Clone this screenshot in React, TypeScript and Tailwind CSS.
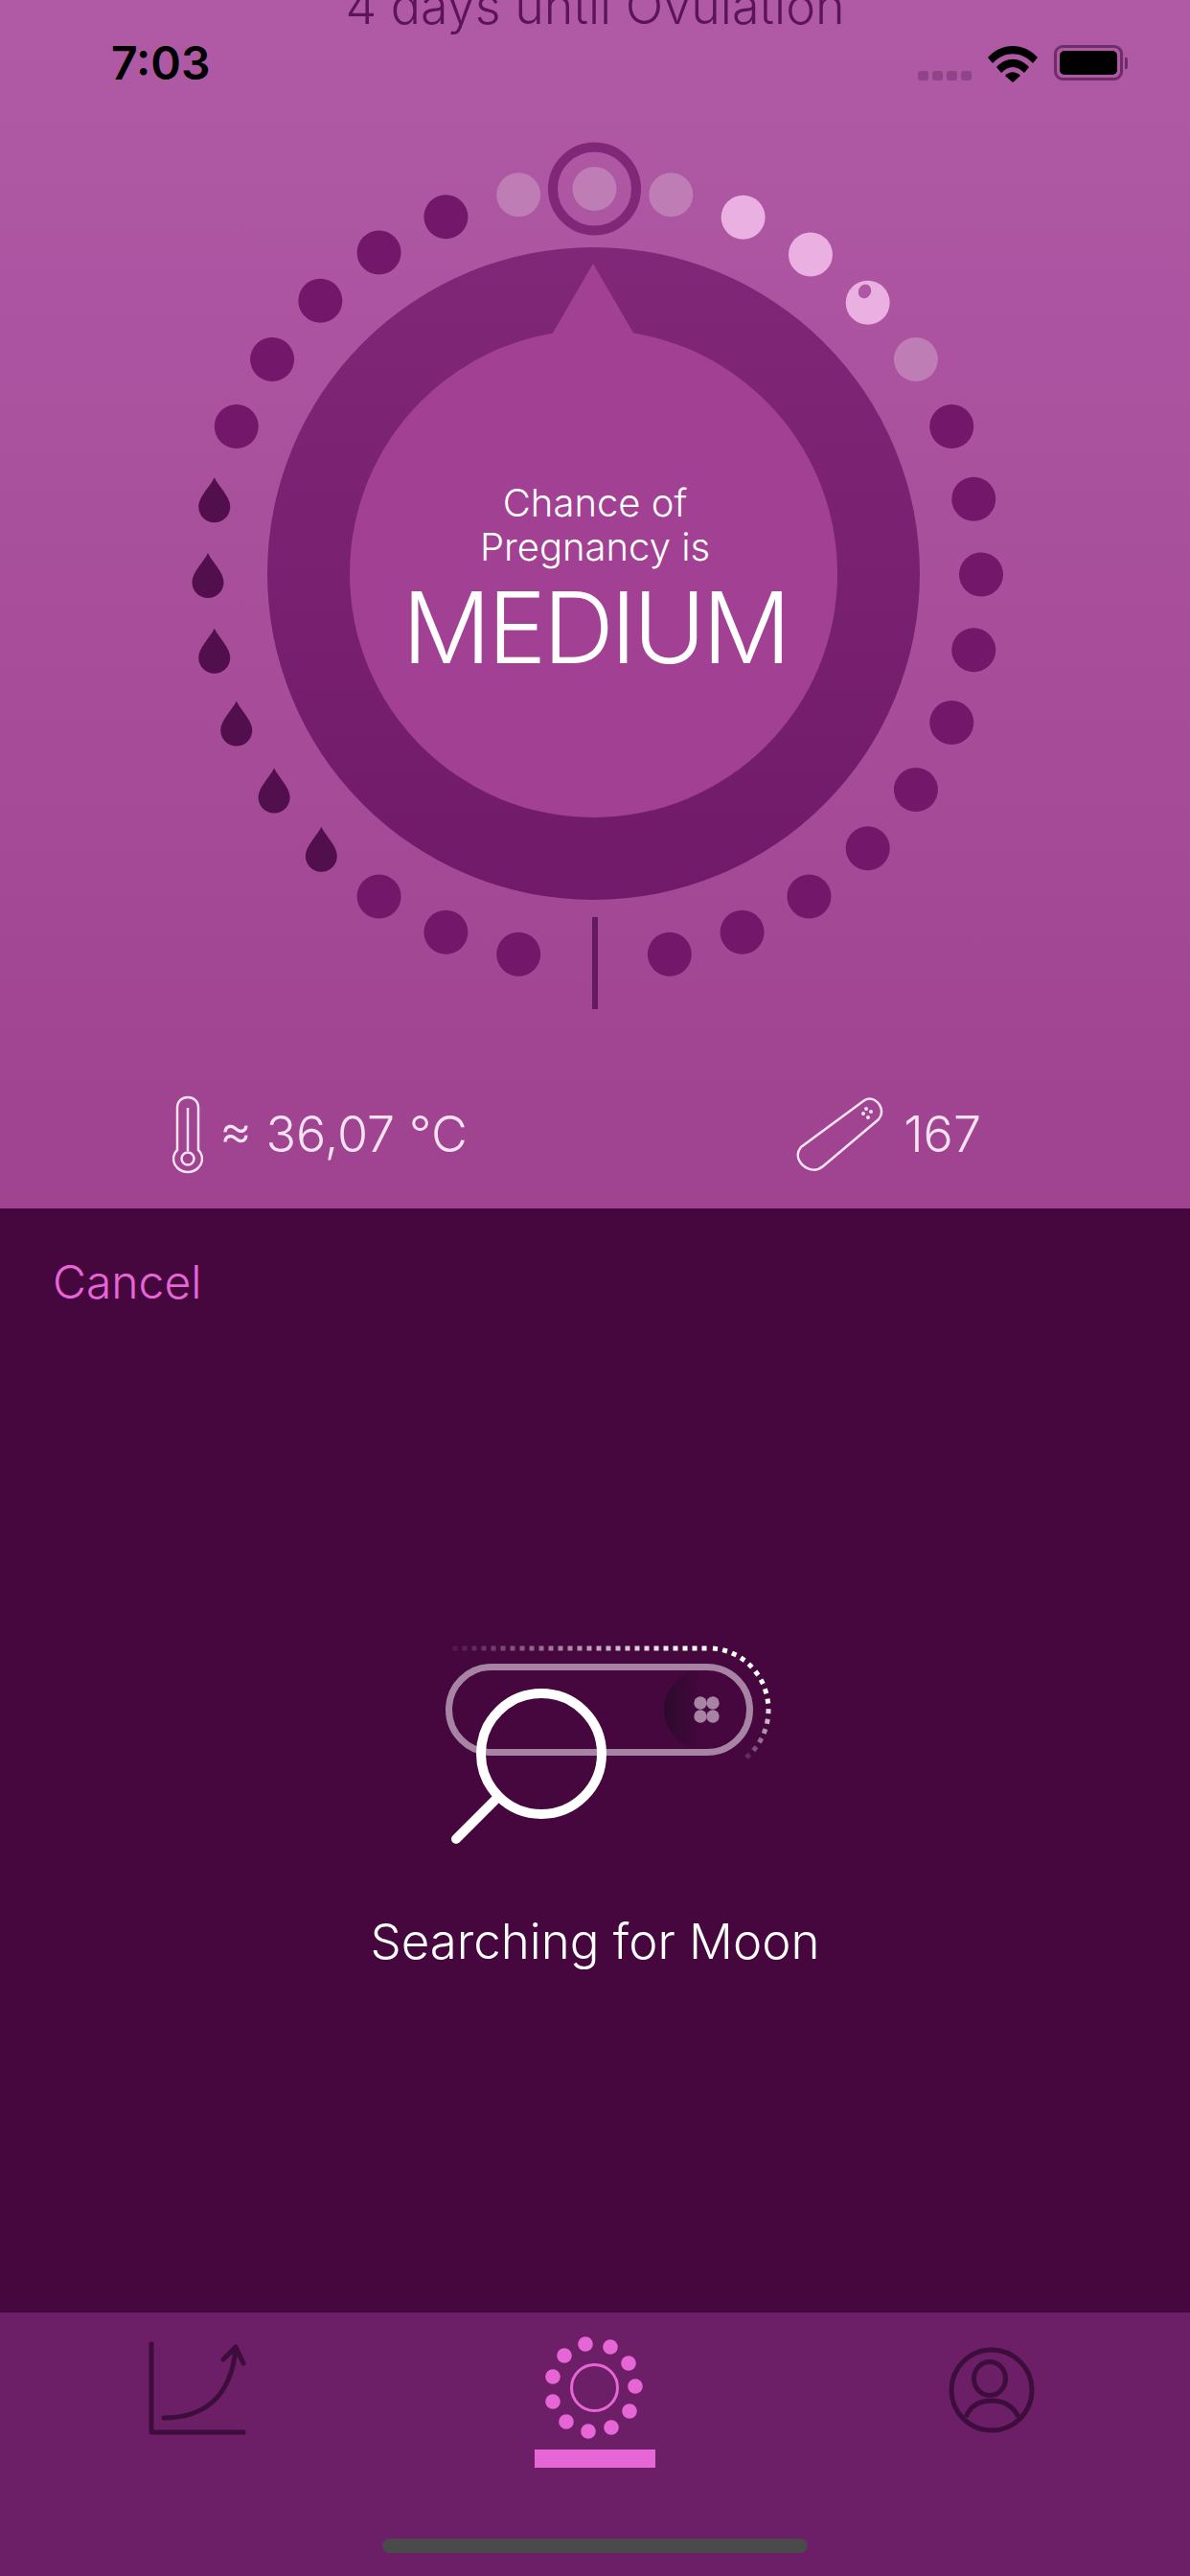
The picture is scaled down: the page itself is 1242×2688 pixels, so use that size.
import React from 'react';

const fontInter = { fontFamily: 'Inter, "Liberation Sans", sans-serif' };

// cycle dial: 32 slots, clockwise from the top
const CX = 620;
const CY = 599.5;
const R = 404;
const SLOTS = 32;

// the fertile dots sit a touch off the circle
const NUDGE: Record<number, [number, number]> = {
  1: [1.5, 0],
  2: [1, 0.5],
  3: [1.5, 2],
  4: [0, 2],
  20: [1, 1.5],
  21: [2, 1.5],
  22: [0, 1.5],
  23: [0, 1.5],
  24: [1, 1.5],
  25: [0, 1.5],
};

const slot = (i: number) => {
  const a = (i * 2 * Math.PI) / SLOTS;
  const [dx, dy] = NUDGE[i] ?? [0, 0];
  return { x: CX + R * Math.sin(a) + dx, y: CY - R * Math.cos(a) + dy };
};

const PALE = [1, 5, 31];
const LIGHT = [2, 3, 4];
const DROPS = [20, 21, 22, 23, 24, 25];

const CycleDial = () => {
  const dots = [];
  for (let i = 1; i < SLOTS; i++) {
    if (i === 16) continue;
    const { x, y } = slot(i);
    if (DROPS.includes(i)) {
      dots.push(
        <path
          key={i}
          transform={`translate(${x} ${y})`}
          d="M0 -24 C4 -15 16.5 -4 16.5 6.5 C16.5 16 9 23 0 23 C-9 23 -16.5 16 -16.5 6.5 C-16.5 -4 -4 -15 0 -24 Z"
          fill="#51104d"
        />
      );
      continue;
    }
    const fill = PALE.includes(i) ? '#bf7db5' : LIGHT.includes(i) ? '#ebb0e2' : '#72176a';
    dots.push(<circle key={i} cx={x} cy={y} r={23} fill={fill} />);
  }

  return (
    <svg width="1242" height="1100" viewBox="0 0 1242 1100" className="block">
      <defs>
        <linearGradient id="ringFill" x1="0" y1="0" x2="0" y2="1">
          <stop offset="0" stopColor="#802778" />
          <stop offset="1" stopColor="#721a6a" />
        </linearGradient>
      </defs>
      <circle cx={619.5} cy={598.5} r={340.5} fill="url(#ringFill)" />
      <circle cx={619.5} cy={598.5} r={254.5} fill="#a24093" />
      <path d="M619 275 L576 349 L662 349 Z" fill="#a24093" />
      {dots}
      {/* today marker */}
      <circle cx={620.5} cy={197} r={43.5} fill="none" stroke="#802778" strokeWidth={10} />
      <circle cx={620.5} cy={197} r={23} fill="#bf7db5" />
      {/* ovulation mark on the egg dot */}
      <ellipse cx={902.5} cy={304} rx={6.5} ry={7.5} transform="rotate(30 902.5 304)" fill="#ae58a3" />
      {/* cycle start tick */}
      <rect x={618} y={957} width={6} height={96} fill="#641a60" />
    </svg>
  );
};

const Thermometer = () => (
  <svg width="32" height="82" viewBox="0 0 32 82" fill="none" stroke="#f6e3f2" strokeWidth="2.5">
    <path d="M5 57 V13 C5 6 10 2 16 2 C22 2 27 6 27 13 V57 C30 60 31 63 31 66 C31 74 24 80 16 80 C8 80 1 74 1 66 C1 63 2 60 5 57 Z" />
    <path d="M16 13 V58" />
    <circle cx="16" cy="66" r="6.5" />
  </svg>
);

const TestStrip = () => (
  <svg width="92" height="78" viewBox="0 0 92 78" fill="none" stroke="#f6e3f2" strokeWidth="2.5">
    <path d="M71 4 C77 -1 84 2 88 8 C91 13 91 18 87 23 L29 72 C23 77 15 77 8 71 C2 65 1 58 6 52 Z" />
    <g fill="#f6e3f2" stroke="none">
      <circle cx="74" cy="12" r="2" />
      <circle cx="79" cy="15" r="2" />
      <circle cx="71" cy="17" r="2" />
      <circle cx="76" cy="21" r="2" />
    </g>
  </svg>
);

const Stat = ({ icon, text, gap }: { icon: React.ReactNode; text: string; gap: string }) => (
  <div className={`flex items-center ${gap}`}>
    {icon}
    <span className="text-[52px] font-light leading-none text-[#f6e3f2]" style={fontInter}>
      {text}
    </span>
  </div>
);

const StatusBar = () => (
  <div className="absolute top-0 left-0 w-full h-[120px]">
    <span className="absolute left-[116px] top-[38px] text-[48px] font-semibold leading-[56px] text-black" style={fontInter}>
      7:03
    </span>
    <div className="absolute left-[958px] top-[74px] flex gap-[4px]">
      <div className="w-[11px] h-[10px] rounded-[3px] bg-[#8f4488]" />
      <div className="w-[11px] h-[10px] rounded-[3px] bg-[#8f4488]" />
      <div className="w-[11px] h-[10px] rounded-[3px] bg-[#8f4488]" />
      <div className="w-[11px] h-[10px] rounded-[3px] bg-[#8f4488]" />
    </div>
    <svg className="absolute left-[1030px] top-[46px]" width="54" height="40" viewBox="0 0 54 40">
      <path d="M1 14 C15 -2 39 -2 53 14 L48 20 C36 7 18 7 6 20 Z" fill="#000" />
      <path d="M10 24 C20 13 34 13 44 24 L39 30 C31 22 23 22 15 30 Z" fill="#000" />
      <path d="M19 33 C24 28 30 28 35 33 L27 40 Z" fill="#000" />
    </svg>
    <div className="absolute left-[1100px] top-[47px] flex items-center">
      <div className="w-[72px] h-[37px] rounded-[9px] border-[3px] border-[#6d2e68] p-[3px]">
        <div className="w-full h-full rounded-[5px] bg-black" />
      </div>
      <div className="ml-[2px] w-[3px] h-[12px] rounded-r-[2px] bg-[#6d2e68]" />
    </div>
  </div>
);

const SearchGraphic = () => {
  // dotted arc around the pill, fading out at both ends
  const marks = [];
  for (let x = 475; x <= 740; x += 10) {
    marks.push({ x, y: 30, a: 0, o: Math.min(1, (x - 455) / 260) });
  }
  for (let t = 6; t <= 148; t += 9.5) {
    const rad = (t * Math.PI) / 180;
    const px = 740 + 62 * Math.sin(rad);
    const py = 94 - 64 * Math.cos(rad);
    marks.push({ x: px, y: py, a: t, o: t < 80 ? 1 : Math.max(0.08, 1 - (t - 80) / 70) });
  }

  return (
    <svg width="400" height="260" viewBox="440 0 400 260" className="block">
      <defs>
        <linearGradient id="moonShade" x1="0" y1="0" x2="1" y2="0">
          <stop offset="0" stopColor="#2c0a2c" />
          <stop offset="0.5" stopColor="#46073f" />
        </linearGradient>
      </defs>
      <circle cx={734} cy={94} r={41} fill="url(#moonShade)" />
      <rect x={468.5} y={49.5} width={314} height={89} rx={44.5} fill="none" stroke="#a784a4" strokeWidth={7} />
      <g fill="#a784a4">
        <circle cx={731} cy={87} r={6.7} />
        <circle cx={744} cy={87} r={6.7} />
        <circle cx={731} cy={101} r={6.7} />
        <circle cx={744} cy={101} r={6.7} />
      </g>
      {marks.map((m, i) => (
        <rect
          key={i}
          x={m.x - 2.5}
          y={m.y - 2.5}
          width={5}
          height={5}
          fill="#fff"
          opacity={m.o}
          transform={`rotate(${m.a} ${m.x} ${m.y})`}
        />
      ))}
      <circle cx={565} cy={140} r={63} fill="none" stroke="#fff" strokeWidth={10} />
      <path d="M517 188 L476 229" stroke="#fff" strokeWidth={10} strokeLinecap="round" />
    </svg>
  );
};

const ChartIcon = () => (
  <svg width="110" height="104" viewBox="0 0 110 104" fill="none" stroke="#3d0d3b" strokeLinecap="round" strokeLinejoin="round">
    <path d="M5 5 V97 H101" strokeWidth="5" />
    <path d="M18 82 C60 82 88 60 93 10" strokeWidth="5" />
    <path d="M80 21 L93 8 L101 25" strokeWidth="5" />
  </svg>
);

const CycleIcon = () => {
  const pts = [
    [611, 2445], [637, 2448], [656, 2465], [663, 2489], [657, 2515], [638, 2532],
    [614, 2536], [591, 2526], [577, 2505], [577, 2479], [589, 2457],
  ];
  return (
    <svg width="110" height="110" viewBox="565 2435 110 110" fill="none">
      {pts.map(([x, y]) => (
        <circle key={x * y} cx={x} cy={y} r={7.8} fill="#e766d6" />
      ))}
      <circle cx={620.5} cy={2490.5} r={24} stroke="#e766d6" strokeWidth={3} />
    </svg>
  );
};

const ProfileIcon = () => (
  <svg width="92" height="92" viewBox="0 0 92 92" fill="none" stroke="#3d0d3b" strokeWidth="5">
    <circle cx="46" cy="46" r="42" />
    <ellipse cx="44" cy="34" rx="16.5" ry="17.5" />
    <path d="M19 74 C24 62 34 57 46 57 C58 57 68 62 74 74" />
  </svg>
);

export default function App() {
  return (
    <div className="w-[1242px] h-[2688px] flex flex-col overflow-hidden bg-[#46073f]">
      {/* dashboard */}
      <section className="relative h-[1261px] shrink-0 overflow-hidden bg-gradient-to-b from-[#b05aa6] to-[#9f4290]">
        <p className="mt-[-20px] text-center text-[52px] leading-[54px] font-light text-[#5b1457]" style={fontInter}>
          4 days until Ovulation
        </p>
        <div className="absolute inset-x-0 top-0">
          <CycleDial />
        </div>
        <StatusBar />
        <div className="absolute top-[502px] inset-x-0 flex flex-col items-center text-white" style={fontInter}>
          <p className="text-[40px] leading-[46px] font-light">Chance of</p>
          <p className="text-[40px] leading-[46px] font-light">Pregnancy is</p>
          <p className="mt-[5px] text-[103px] leading-[112px] font-[350] tracking-[-3.5px]">MEDIUM</p>
        </div>
        <div className="absolute top-[1143px] left-[180px] right-[218px] flex justify-between">
          <Stat icon={<Thermometer />} gap="gap-[17px]" text="≈ 36,07 °C" />
          <Stat icon={<TestStrip />} gap="gap-[21px]" text="167" />
        </div>
      </section>

      {/* pairing sheet */}
      <section className="flex-1 flex flex-col bg-[#46073f]">
        <button className="self-start ml-[55px] mt-[48px] text-[48px] leading-[58px] font-light text-[#e766d6]" style={fontInter}>
          Cancel
        </button>
        <div className="mt-[323px] ml-[440px] w-[400px]">
          <SearchGraphic />
        </div>
        <p className="mt-[45px] text-center text-[51px] leading-[62px] font-light text-white" style={fontInter}>
          Searching for Moon
        </p>
      </section>

      {/* tab bar */}
      <nav className="relative h-[275px] shrink-0 bg-[#6c1e66]">
        <div className="absolute left-[153px] top-[28px]">
          <ChartIcon />
        </div>
        <div className="absolute left-[565px] top-[23px]">
          <CycleIcon />
        </div>
        <div className="absolute left-[558px] top-[143px] w-[126px] h-[19px] bg-[#e766d6]" />
        <div className="absolute left-[989px] top-[35px]">
          <ProfileIcon />
        </div>
        <div className="absolute left-[399px] top-[236px] w-[444px] h-[15px] rounded-full bg-[#4a4a4a]" />
      </nav>
    </div>
  );
}
